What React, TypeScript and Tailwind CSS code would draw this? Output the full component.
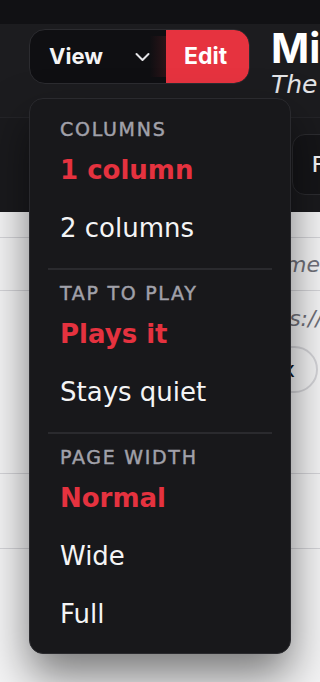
import React from "react";

const sans = { fontFamily: '"DejaVu Sans", sans-serif' };

function Section({
  title,
  items,
  selected,
}: {
  title: string;
  items: string[];
  selected: number;
}) {
  return (
    <div>
      <div className="h-[24px] flex items-center px-[12px] text-[19px] leading-[24px] tracking-[0.09em] text-[#a1a1aa] [-webkit-text-stroke:0.45px_#a1a1aa]">
        {title}
      </div>
      {items.map((it, i) => (
        <div
          key={it}
          className={
            i === selected
              ? "h-[58px] flex items-center px-[12px] text-[26px] font-bold text-[#e5323f]"
              : "h-[58px] flex items-center px-[12px] text-[26px] text-[#f4f4f5]"
          }
        >
          {it}
        </div>
      ))}
    </div>
  );
}

export default function App() {
  return (
    <div
      className="relative w-[320px] h-[682px] overflow-hidden bg-[#f4f4f5]"
      style={sans}
    >
      {/* top strip */}
      <div className="h-[24px] bg-[#111114]" />

      {/* header */}
      <div className="h-[93px] bg-[#1c1c1f] flex items-start pl-[29px] pt-[5px] whitespace-nowrap">
        <div className="shrink-0 w-[221px] h-[55px] rounded-[16px] border border-[#2c2c30] bg-[#0f0f12] flex items-stretch overflow-hidden">
          <div
            className="flex items-center pl-[19px] text-[22px] font-bold text-[#f4f4f5] w-[86px]"
            style={{ fontFamily: "Inter, sans-serif" }}
          >
            View
          </div>
          <div className="flex items-center w-[50px] pl-[19px]">
            <svg width="15" height="10" viewBox="0 0 15 10" fill="none">
              <path d="M1.5 2 L7.5 8 L13.5 2" stroke="#e4e4e7" strokeWidth="2" strokeLinecap="round" strokeLinejoin="round" />
            </svg>
          </div>
          <div className="w-[0px] relative">
            <div className="absolute right-0 top-[6px] bottom-[6px] w-[16px] bg-gradient-to-r from-transparent to-[#e5323f22]" />
          </div>
          <div
            className="flex-1 bg-[#e6333f] flex items-center pl-[18px] text-[23px] font-bold text-white rounded-r-[14px]"
            style={{ fontFamily: "Inter, sans-serif" }}
          >
            Edit
          </div>
        </div>
        <div className="ml-[21px] flex flex-col" style={{ fontFamily: "Inter, sans-serif" }}>
          <div className="text-[41px] leading-[44px] font-bold text-white -mt-[3px]">Mixes</div>
          <div className="text-[25px] leading-[30px] italic text-[#e4e4e7]" style={sans}>
            The set list
          </div>
        </div>
      </div>

      {/* toolbar */}
      <div className="h-[95px] bg-[#1a1a1d] border-t border-[#242428] pl-[292px] pt-[16px] whitespace-nowrap">
        <div
          className="inline-flex items-center h-[61px] rounded-[13px] border border-[#2c2c30] bg-[#151518] px-[19px] text-[22px] font-medium text-[#f4f4f5]"
          style={{ fontFamily: "Inter, sans-serif" }}
        >
          Find
        </div>
      </div>

      {/* content */}
      <div className="pt-[25px] whitespace-nowrap">
        <div className="h-[54px] border-y border-[#d4d4d8] flex items-center pl-[201px] overflow-hidden">
          <span className="italic text-[22px] text-[#71717a]">Type some search words</span>
        </div>
        <div className="h-[55px] flex items-center pl-[244px] overflow-hidden">
          <span className="italic text-[22px] text-[#71717a]">https://</span>
        </div>
        <div className="flex justify-end pr-[2px]">
          <div className="h-[47px] rounded-full border-2 border-[#d4d4d8] bg-[#f4f4f5] flex items-center pl-[20px] pr-[21px] text-[22px] text-[#111827]">
            Remix
          </div>
        </div>
        <div className="h-[80px]" />
        <div className="h-[76px] border-y border-[#d4d4d8]" />
      </div>

      {/* dropdown menu */}
      <div className="absolute left-[29px] top-[98px] w-[262px] h-[556px] rounded-[14px] border border-[#2a2a2e] bg-[#18181b] shadow-[0_22px_44px_rgba(0,0,0,0.5)] px-[18px] pt-[18px] pb-[12px]">
        <Section title="COLUMNS" items={["1 column", "2 columns"]} selected={0} />
        <div className="my-[11px] h-[2px] bg-[#2a2a2e]" />
        <Section title="TAP TO PLAY" items={["Plays it", "Stays quiet"]} selected={0} />
        <div className="my-[11px] h-[2px] bg-[#2a2a2e]" />
        <Section title="PAGE WIDTH" items={["Normal", "Wide", "Full"]} selected={0} />
      </div>
    </div>
  );
}
